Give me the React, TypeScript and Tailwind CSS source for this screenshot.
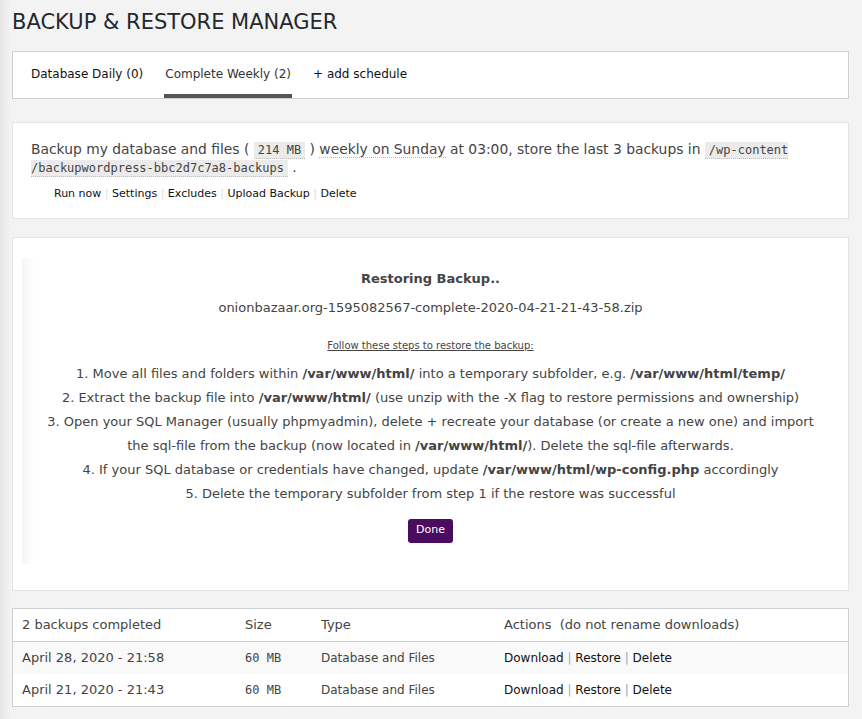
export default function App() {
  const steps = [
    <>1. Move all files and folders within <b>/var/www/html/</b> into a temporary subfolder, e.g. <b>/var/www/html/temp/</b></>,
    <>2. Extract the backup file into <b>/var/www/html/</b> (use unzip with the -X flag to restore permissions and ownership)</>,
    <>3. Open your SQL Manager (usually phpmyadmin), delete + recreate your database (or create a new one) and import<br />the sql-file from the backup (now located in <b>/var/www/html/</b>). Delete the sql-file afterwards.</>,
    <>4. If your SQL database or credentials have changed, update <b>/var/www/html/wp-config.php</b> accordingly</>,
    <>5. Delete the temporary subfolder from step 1 if the restore was successful</>,
  ];

  const rows = [
    { date: "April 28, 2020 - 21:58", size: "60 MB" },
    { date: "April 21, 2020 - 21:43", size: "60 MB" },
  ];

  return (
    <div className="min-h-[719px] bg-[#f3f3f3] bg-gradient-to-r from-[#e6e6e6] from-0% to-[#f3f3f3] to-[1.2%] font-['DejaVu_Sans',sans-serif] text-[#23282d]">
      <div className="pl-3 pr-[13px] pt-[9px] pb-3">
        {/* Title */}
        <h1 className="text-[21px] leading-[27px] font-normal text-[#23282d]">BACKUP &amp; RESTORE MANAGER</h1>

        {/* Tabs */}
        <div className="mt-[15px] h-[48px] bg-white border border-[#ccd0d4] flex items-stretch pl-[17px] text-[12px] text-[#111]">
          <div className="flex items-center px-[1px] mr-[20px] pb-[3px]">Database Daily (0)</div>
          <div className="flex items-center px-[1px] mr-[21px] border-b-4 border-[#555] pt-[1px] text-[#333]">Complete Weekly (2)</div>
          <div className="flex items-center pb-[3px]">+ add schedule</div>
        </div>

        {/* Schedule */}
        <div className="mt-[23px] bg-white border border-[#e2e4e7] px-[18px] pt-[18px] pb-[15px]">
          <p className="text-[13.85px] leading-[17px] text-[#444]">
            Backup my database and files ({" "}
            <code className="font-['DejaVu_Sans_Mono',monospace] text-[12px] bg-[#ebebeb] px-[4px] py-[1px] border-b border-dotted border-[#bbb]">214 MB</code>{" "}
            ) <span className="border-b border-dotted border-[#bbb]">weekly on Sunday</span> at 03:00, store the last 3 backups in{" "}
            <code className="font-['DejaVu_Sans_Mono',monospace] text-[12px] bg-[#ebebeb] px-[4px] py-[1px] border-b border-dotted border-[#bbb]">/wp-content /backupwordpress-bbc2d7c7a8-backups</code> .
          </p>
          <div className="mt-[9px] ml-[23px] flex items-center text-[11px] text-[#111]">
            {["Run now", "Settings", "Excludes", "Upload Backup", "Delete"].map((a, i) => (
              <span key={a} className="flex items-center">
                {i > 0 && <span className="mx-[3.5px] text-[#ddd]">|</span>}
                {a}
              </span>
            ))}
          </div>
        </div>

        {/* Restore panel */}
        <div className="mt-[18px] bg-white border border-[#e2e4e7] pl-[9px] pr-[9px] pt-[20px] pb-[26px]">
          <div className="bg-gradient-to-r from-[#f6f6f6] to-white to-[1.5%] pt-[12px] pb-[21px] text-center text-[13px] text-[#444]">
            <div className="font-bold leading-[18px]">Restoring Backup..</div>
            <div className="mt-[11px] leading-[18px]">onionbazaar.org-1595082567-complete-2020-04-21-21-43-58.zip</div>
            <div className="mt-[22px] text-[10px] underline leading-[14px]">Follow these steps to restore the backup:</div>
            <div className="mt-[9px] leading-[24px]">
              {steps.map((s, i) => (
                <div key={i}>{s}</div>
              ))}
            </div>
            <button className="mt-[13px] h-[24px] px-[8px] rounded-[3px] bg-[#4b0c5f] text-white text-[11px]">Done</button>
          </div>
        </div>

        {/* Backups table */}
        <div className="mt-[17px] bg-white border border-[#ccd0d4] text-[13px] text-[#444]">
          <div className="grid grid-cols-[223px_76px_183px_1fr] h-[33px] items-center pl-[9px] border-b border-[#ccd0d4]">
            <div>2 backups completed</div>
            <div>Size</div>
            <div>Type</div>
            <div>Actions&nbsp; (do not rename downloads)</div>
          </div>
          {rows.map((r, i) => (
            <div key={i} className={`grid grid-cols-[223px_76px_183px_1fr] h-[32px] items-center pl-[9px] ${i === 0 ? "bg-[#f9f9f9]" : "bg-white"}`}>
              <div>{r.date}</div>
              <div className="font-['DejaVu_Sans_Mono',monospace] text-[12px]">{r.size}</div>
              <div className="text-[12px]">Database and Files</div>
              <div className="text-[12px] text-[#111]">
                Download <span className="text-[#aaa]">|</span> Restore <span className="text-[#8aa8c8]">|</span> Delete
              </div>
            </div>
          ))}
        </div>
      </div>
    </div>
  );
}
